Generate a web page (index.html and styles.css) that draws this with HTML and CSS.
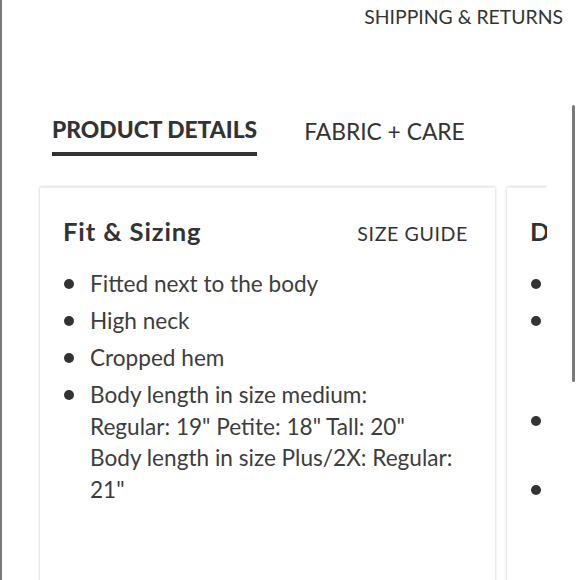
FILE: index.html
```html
<!DOCTYPE html>
<html>
<head>
<meta charset="utf-8">
<link rel="stylesheet" href="styles.css">
</head>
<body>
<div class="page">
  <div class="top-bar">
    <a class="shipping">SHIPPING &amp; RETURNS</a>
  </div>
  <div class="tabs">
    <div class="tab active">PRODUCT DETAILS</div>
    <div class="tab">FABRIC + CARE</div>
  </div>
  <div class="cards">
    <div class="card">
      <div class="card-head">
        <h2 class="card-title">Fit &amp; Sizing</h2>
        <span class="card-link">SIZE GUIDE</span>
      </div>
      <ul class="bullets">
        <li><span class="dot"></span><span>Fitted next to the body</span></li>
        <li><span class="dot"></span><span>High neck</span></li>
        <li><span class="dot"></span><span>Cropped hem</span></li>
        <li><span class="dot"></span><span>Body length in size medium:<br>Regular: 19" Petite: 18" Tall: 20"<br>Body length in size Plus/2X: Regular:<br>21"</span></li>
      </ul>
    </div>
    <div class="card">
      <div class="card-head">
        <h2 class="card-title">Details</h2>
      </div>
      <ul class="bullets">
        <li><span class="dot"></span><span>Ribbed knit</span></li>
        <li><span class="dot"></span><span>Made from soft, breathable<br>fabric with a smooth and<br>comfortable finish</span></li>
        <li><span class="dot"></span><span>Designed to pair with<br>high-rise bottoms</span></li>
        <li><span class="dot"></span><span>Imported</span></li>
      </ul>
    </div>
  </div>
  <div class="scrollbar"></div>
</div>
</body>
</html>
```

FILE: styles.css
```css
html, body {
  margin: 0;
  padding: 0;
  background: #fff;
}
body {
  font-family: Lato, "Noto Sans", sans-serif;
  color: #333;
}
.page {
  position: relative;
  height: 580px;
  overflow: hidden;
  border-left: 2px solid #7a7a7a;
  box-sizing: border-box;
}
.top-bar {
  display: flex;
  justify-content: flex-end;
  padding: 6px 17px 0 0;
}
.shipping {
  font-size: 19.4px;
  color: #333;
  line-height: 22px;
}
.tabs {
  display: flex;
  gap: 47px;
  margin: 89px 0 0 50px;
  align-items: flex-start;
}
.tab {
  font-size: 22.8px;
  line-height: 28px;
  color: #333;
}
.tab.active {
  font-weight: 900;
  font-size: 22.8px;
  border-bottom: 4px solid #333;
  padding-bottom: 9px;
  margin-top: -2px;
}
.cards {
  display: flex;
  gap: 12px;
  margin: 29px 0 0 35px;
  padding: 2px 0 0 3px;
  width: 507px;
  overflow: hidden;
  height: 400px;
}
.card {
  flex: 0 0 455px;
  background: #fff;
  box-shadow: 0 0 3px rgba(0,0,0,0.22);
  border-top: 1px solid #eee;
  padding: 28px 23px 0 23px;
  box-sizing: border-box;
  height: 420px;
}
.card-head {
  display: flex;
  justify-content: space-between;
  align-items: baseline;
}
.card-title {
  margin: 0;
  font-size: 25.5px;
  font-weight: 700;
  letter-spacing: 0.9px;
  color: #333;
  line-height: 30px;
}
.card-link {
  font-size: 19.6px;
  letter-spacing: 0.6px;
  color: #333;
  margin-right: 4px;
}
.bullets {
  list-style: none;
  margin: 22px 0 0 0;
  padding: 0;
}
.bullets li {
  display: flex;
  gap: 16px;
  font-size: 22.6px;
  line-height: 31.5px;
  color: #3d3d3d;
  margin-bottom: 5.5px;
}
.dot {
  flex: 0 0 10px;
  width: 10px;
  height: 10px;
  border-radius: 50%;
  background: #333;
  margin-top: 11px;
  margin-left: 1px;
}
.scrollbar {
  position: absolute;
  left: 570px;
  top: 105px;
  width: 3px;
  height: 277px;
  border-radius: 2px;
  background: #7a7a7a;
}
```
